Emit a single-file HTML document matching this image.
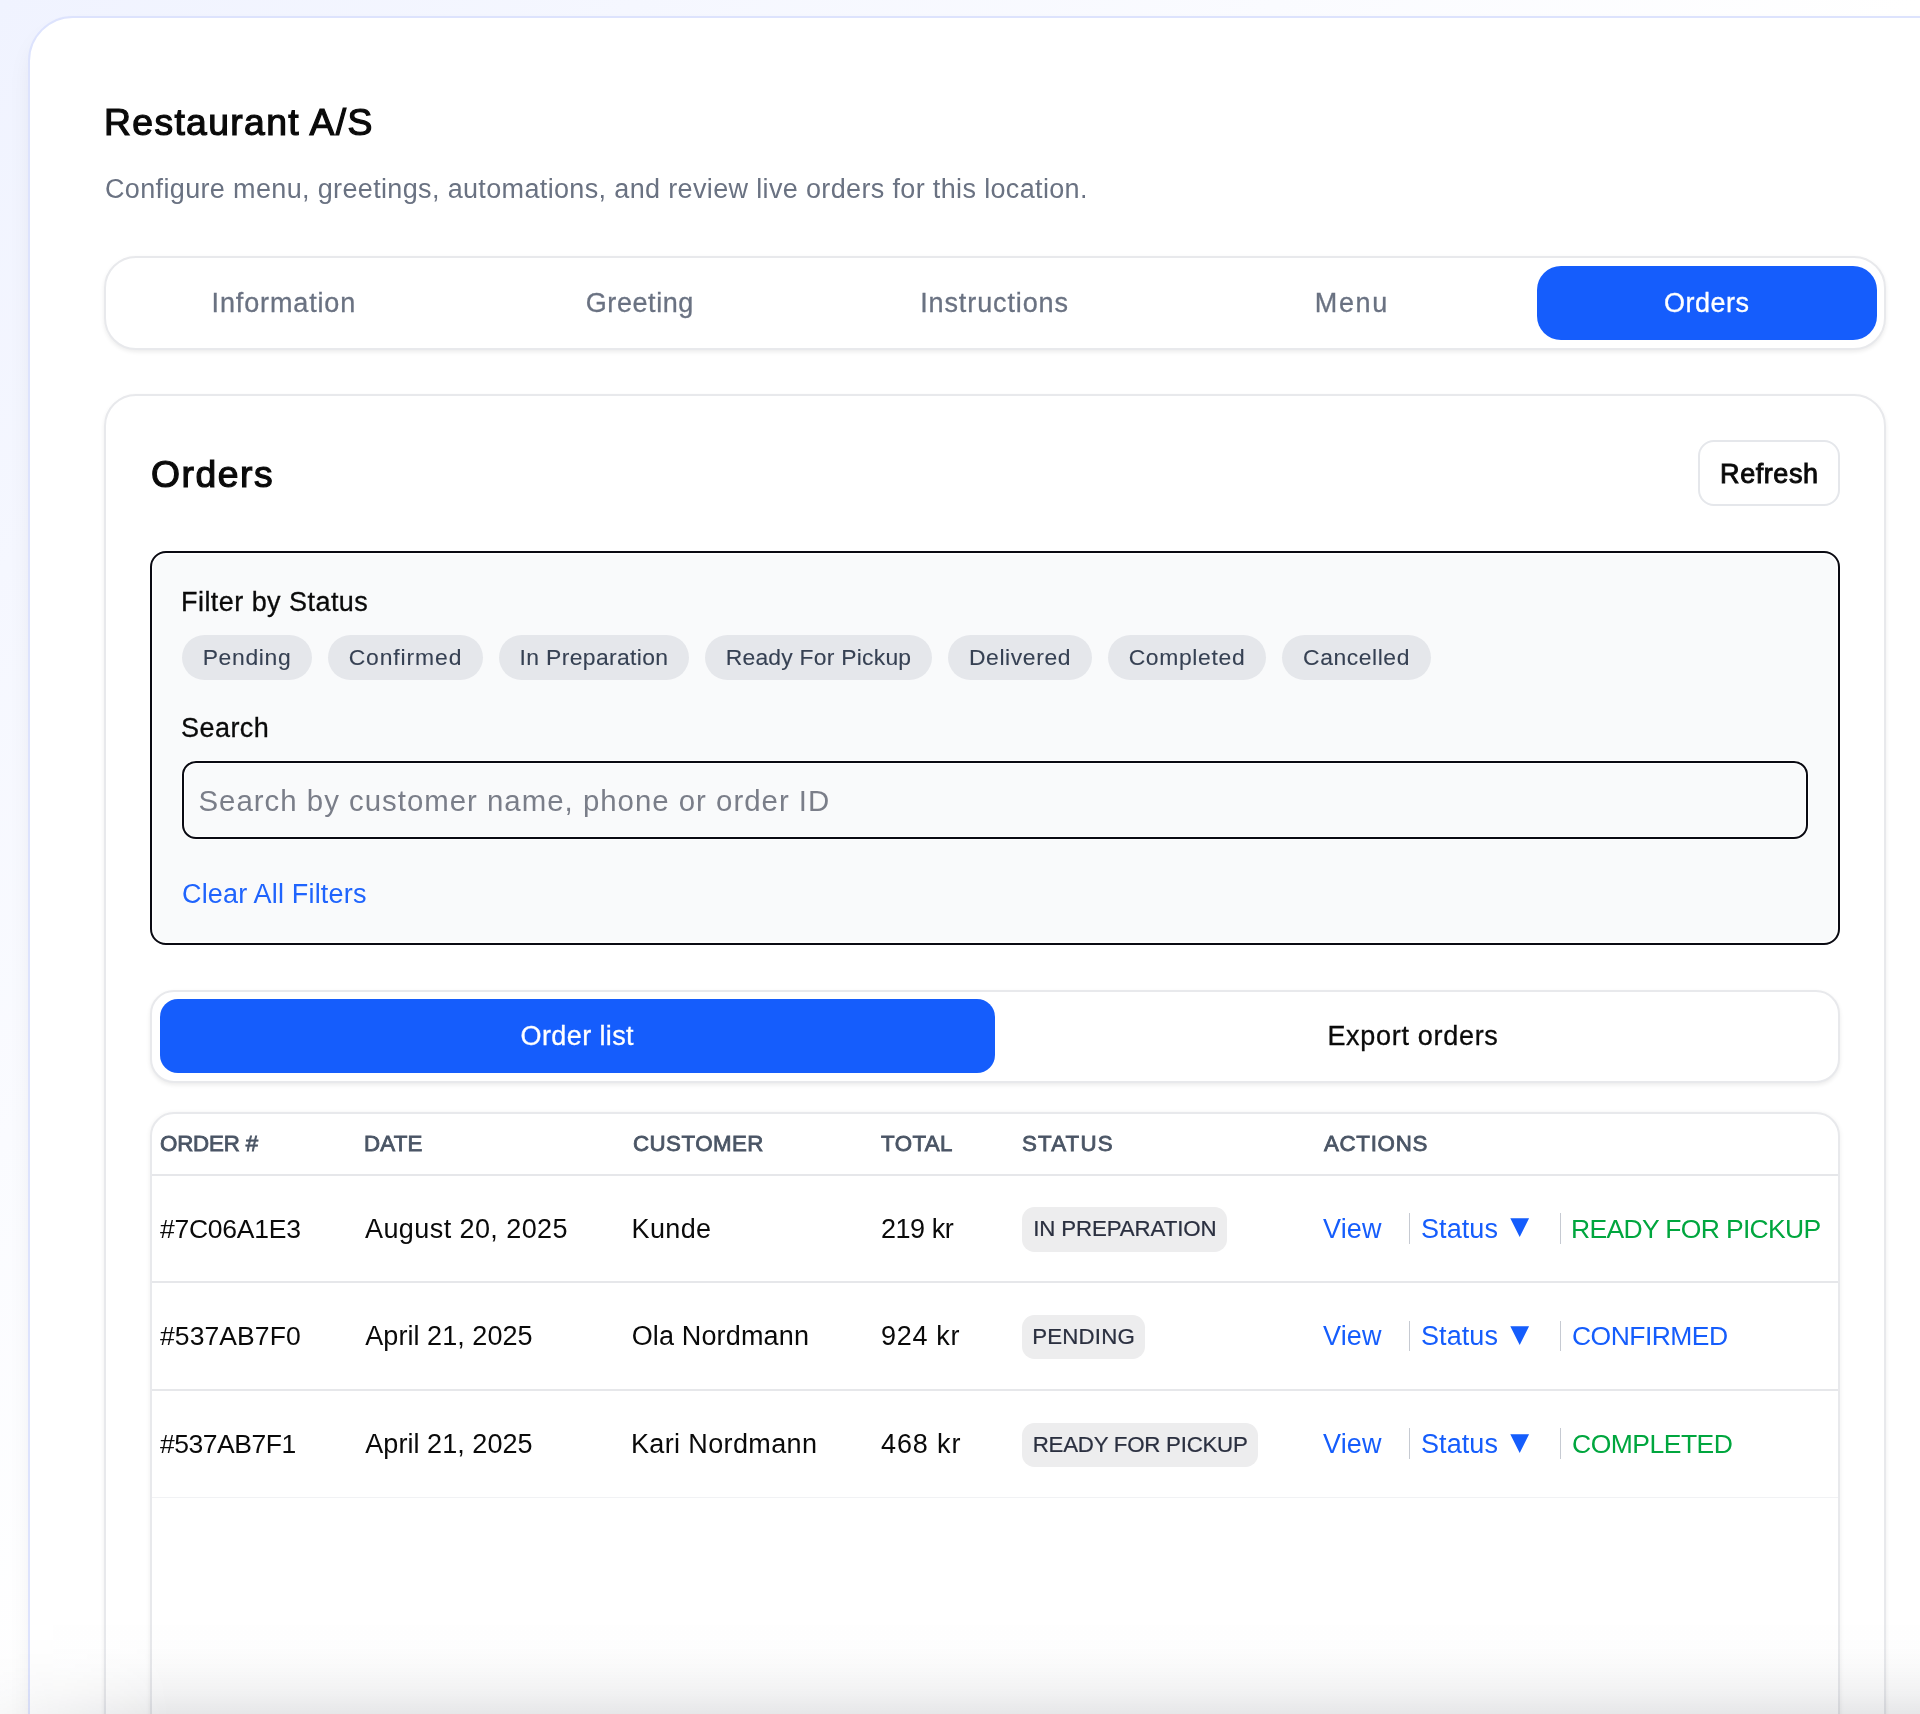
<!DOCTYPE html>
<html lang="en">
<head>
<meta charset="utf-8">
<title>Restaurant A/S – Orders</title>
<style>
*{box-sizing:border-box;margin:0;padding:0}
html,body{width:1920px;height:1714px;overflow:hidden}
body{font-family:"Liberation Sans",sans-serif;color:#0a0a0a;position:relative;
 background:linear-gradient(to bottom right,#f0f3ff 0%,#ffffff 50%,#ffffff 100%)}
.abs{position:absolute}
.page{position:absolute;left:27.6px;top:16.3px;width:1960px;height:1800px;background:#fff;border:2px solid #dde3fd;border-radius:45px;box-shadow:0 14px 28px -8px rgba(15,23,42,.10)}
h1{position:absolute;left:104px;top:100px;font-size:37.3px;line-height:44px;font-weight:400;-webkit-text-stroke:1.2px #0a0a0a;color:#0a0a0a;white-space:nowrap;letter-spacing:1.35px}
.sub{position:absolute;left:105px;top:171px;font-size:27px;line-height:36px;color:#6a7282;white-space:nowrap;letter-spacing:.35px}
.tabs{position:absolute;left:104px;top:256px;width:1782px;height:94px;border:2px solid #e8e9ec;border-radius:32px;background:#fff;box-shadow:0 2px 4px rgba(0,0,0,.08)}
.tab{position:absolute;top:7.6px;width:340.5px;height:74px;border-radius:24px;font-size:27px;line-height:74px;text-align:center;color:#6a7282;white-space:nowrap;-webkit-text-stroke:.3px currentColor}
.tab.on{background:#155dfc;color:#fff}
.card{position:absolute;left:104px;top:393.5px;width:1782px;height:1500px;border:2px solid #e8e9ec;border-radius:32px;background:#fff;box-shadow:0 2px 4px rgba(0,0,0,.07)}
h2{position:absolute;left:151px;top:451px;font-size:37.3px;line-height:46px;font-weight:400;-webkit-text-stroke:1.2px #0a0a0a;white-space:nowrap;letter-spacing:1.54px}
.refresh{position:absolute;left:1698px;top:440px;width:142px;height:66px;border:2px solid #e5e7eb;border-radius:16px;font-size:27px;font-weight:400;-webkit-text-stroke:.9px #0a0a0a;line-height:64px;letter-spacing:.57px;padding-left:.7px;text-align:center;background:#fff}
.filter{position:absolute;left:150px;top:551.3px;width:1690.3px;height:393.7px;border:2px solid #0a0a12;border-radius:16px;background:#f9fafb;box-shadow:inset 0 0 0 1.5px #fff}
.lbl{position:absolute;left:181px;font-size:27px;line-height:34px;color:#0a0a0a;white-space:nowrap;-webkit-text-stroke:.3px currentColor}
.chip{position:absolute;top:635px;height:45px;border-radius:23px;background:#e5e7eb;color:#364153;font-size:22.9px;line-height:45px;-webkit-text-stroke:.1px currentColor;text-align:center;white-space:nowrap}
.search{position:absolute;left:182px;top:761px;width:1626.4px;height:78px;border:2px solid #0a0a12;border-radius:14px;background:#f9fafb;box-shadow:inset 0 0 0 1px #fff,0 0 0 1px #fff;font-size:29.4px;line-height:76.5px;padding-left:14.5px;color:#7a7e89;white-space:nowrap;letter-spacing:1px}
.clear{position:absolute;left:182px;top:877px;font-size:27px;line-height:34px;color:#1f64fd;white-space:nowrap;letter-spacing:.18px}
.subtabs{position:absolute;left:150px;top:990px;width:1690px;height:93px;border:2px solid #e8e9ec;border-radius:24px;background:#fff;box-shadow:0 2px 4px rgba(0,0,0,.08)}
.stab{position:absolute;top:7px;height:74.4px;border-radius:18px;font-size:27px;line-height:74px;text-align:center;white-space:nowrap;color:#0a0a0a;-webkit-text-stroke:.3px currentColor}
.stab.on{background:#155dfc;color:#fff}
.table{position:absolute;left:150px;top:1112.4px;width:1690px;height:700px;border:2px solid #e8e9ec;border-radius:24px;background:#fff;box-shadow:0 1px 5px rgba(0,0,0,.07)}
.th{position:absolute;top:1129px;font-size:22.3px;line-height:30px;font-weight:400;-webkit-text-stroke:.8px #4a5565;color:#4a5565;white-space:nowrap}
.hr{position:absolute;left:152px;width:1686px;height:2px;background:#e6e7ea}
.td{position:absolute;font-size:27px;line-height:34px;color:#0a0a0a;white-space:nowrap}
.badge{position:absolute;height:44.8px;border-radius:12.5px;background:#ededee;color:#2b3040;font-size:22.3px;line-height:44.6px;-webkit-text-stroke:.22px currentColor;text-align:center;white-space:nowrap}
.tri{position:absolute;left:1510.2px;margin-top:-2.3px;font-size:24.6px;line-height:34px;white-space:nowrap;font-family:"DejaVu Sans",sans-serif}
.blue{color:#155dfc}.green{color:#00a63e}
.sep{position:absolute;width:1.5px;height:30.5px;background:#c6cad2}
.fade{position:absolute;left:0;top:1618px;width:1920px;height:96px;background:linear-gradient(to bottom,rgba(20,25,40,0) 0%,rgba(20,25,40,.008) 30%,rgba(20,25,40,.028) 55%,rgba(20,25,40,.06) 78%,rgba(20,25,40,.105) 100%);-webkit-mask-image:linear-gradient(to right,rgba(0,0,0,.3) 0px,rgba(0,0,0,.45) 40px,rgba(0,0,0,.75) 120px,#000 170px);mask-image:linear-gradient(to right,rgba(0,0,0,.3) 0px,rgba(0,0,0,.45) 40px,rgba(0,0,0,.75) 120px,#000 170px)}
</style>
</head>
<body>
<div class="page"></div>
<div id="root" style="position:absolute;left:0;top:0;width:1920px;height:1714px;will-change:transform">
<h1>Restaurant A/S</h1>
<div class="sub">Configure menu, greetings, automations, and review live orders for this location.</div>

<div class="tabs">
 <div class="tab" style="left:7.6px;letter-spacing:0.86px">Information</div>
 <div class="tab" style="left:363.6px;letter-spacing:0.57px">Greeting</div>
 <div class="tab" style="left:718.3px;letter-spacing:0.89px">Instructions</div>
 <div class="tab" style="left:1075.6px;letter-spacing:1.63px">Menu</div>
 <div class="tab on" style="left:1430.5px;letter-spacing:.5px">Orders</div>
</div>

<div class="card"></div>
<h2>Orders</h2>
<div class="refresh">Refresh</div>

<div class="filter"></div>
<div class="lbl" style="top:585px;letter-spacing:0.45px">Filter by Status</div>
<div class="chip" style="left:182px;width:130px;letter-spacing:0.67px">Pending</div>
<div class="chip" style="left:328px;width:155px;letter-spacing:0.9px">Confirmed</div>
<div class="chip" style="left:499px;width:190px;letter-spacing:0.37px">In Preparation</div>
<div class="chip" style="left:705px;width:227px;letter-spacing:0.23px">Ready For Pickup</div>
<div class="chip" style="left:948px;width:144px;letter-spacing:0.6px">Delivered</div>
<div class="chip" style="left:1108px;width:158px;letter-spacing:0.66px">Completed</div>
<div class="chip" style="left:1282px;width:149px;letter-spacing:0.56px">Cancelled</div>
<div class="lbl" style="top:711px;letter-spacing:0.46px">Search</div>
<div class="search">Search by customer name, phone or order ID</div>
<div class="clear">Clear All Filters</div>

<div class="subtabs">
 <div class="stab on" style="left:7.6px;width:835.4px;letter-spacing:0.39px">Order list</div>
 <div class="stab" style="left:843px;width:836px;letter-spacing:0.7px">Export orders</div>
</div>

<div class="table"></div>
<div class="th" style="left:160px;letter-spacing:-0.18px">ORDER #</div>
<div class="th" style="left:364px;letter-spacing:0.2px">DATE</div>
<div class="th" style="left:633px;letter-spacing:0.46px">CUSTOMER</div>
<div class="th" style="left:881px;letter-spacing:0.43px">TOTAL</div>
<div class="th" style="left:1022px;letter-spacing:1.18px">STATUS</div>
<div class="th" style="left:1324px;letter-spacing:0.7px">ACTIONS</div>
<div class="hr" style="top:1174px"></div>
<div class="hr" style="top:1281px"></div>
<div class="hr" style="top:1389px"></div>
<div class="hr" style="top:1496.9px;height:1.5px;background:#f1f2f4"></div>

<!-- row 1 -->
<div class="td" style="left:160px;top:1211.5px;letter-spacing:-0.25px;font-size:26.5px">#7C06A1E3</div>
<div class="td" style="left:365px;top:1211.5px;letter-spacing:0.42px">August 20, 2025</div>
<div class="td" style="left:631.5px;top:1211.5px;letter-spacing:0.38px">Kunde</div>
<div class="td" style="left:881px;top:1211.5px;letter-spacing:-0.46px">219 kr</div>
<div class="badge" style="left:1022.3px;top:1207px;width:205px;letter-spacing:-0.12px">IN PREPARATION</div>
<div class="td blue" style="left:1323px;top:1211.5px;letter-spacing:0.17px">View</div>
<div class="sep" style="left:1408.5px;top:1213px"></div>
<div class="td blue" style="left:1421px;top:1211.5px;letter-spacing:0.08px">Status</div>
<div class="tri blue" style="top:1211.5px">▼</div>
<div class="sep" style="left:1559.5px;top:1213px"></div>
<div class="td green" style="left:1571px;top:1211.5px;letter-spacing:-.66px;font-size:26.5px">READY FOR PICKUP</div>

<!-- row 2 -->
<div class="td" style="left:160px;top:1319px;letter-spacing:0.09px;font-size:26.5px">#537AB7F0</div>
<div class="td" style="left:365.3px;top:1319px;letter-spacing:0.05px">April 21, 2025</div>
<div class="td" style="left:631.7px;top:1319px;letter-spacing:0.15px">Ola Nordmann</div>
<div class="td" style="left:881px;top:1319px;letter-spacing:0.7px">924 kr</div>
<div class="badge" style="left:1022.3px;top:1314.6px;width:122.5px;letter-spacing:0.17px">PENDING</div>
<div class="td blue" style="left:1323px;top:1319px;letter-spacing:0.17px">View</div>
<div class="sep" style="left:1408.5px;top:1320.7px"></div>
<div class="td blue" style="left:1421px;top:1319px;letter-spacing:0.08px">Status</div>
<div class="tri blue" style="top:1319px">▼</div>
<div class="sep" style="left:1559.5px;top:1320.7px"></div>
<div class="td blue" style="left:1572px;top:1319px;letter-spacing:-0.54px;font-size:26.5px">CONFIRMED</div>

<!-- row 3 -->
<div class="td" style="left:160px;top:1426.8px;letter-spacing:-0.48px;font-size:26.5px">#537AB7F1</div>
<div class="td" style="left:365.3px;top:1426.8px;letter-spacing:0.05px">April 21, 2025</div>
<div class="td" style="left:631px;top:1426.8px;letter-spacing:0.36px">Kari Nordmann</div>
<div class="td" style="left:881px;top:1426.8px;letter-spacing:0.88px">468 kr</div>
<div class="badge" style="left:1022.3px;top:1422.5px;width:235.7px;letter-spacing:-.25px">READY FOR PICKUP</div>
<div class="td blue" style="left:1323px;top:1426.8px;letter-spacing:0.17px">View</div>
<div class="sep" style="left:1408.5px;top:1428.4px"></div>
<div class="td blue" style="left:1421px;top:1426.8px;letter-spacing:0.08px">Status</div>
<div class="tri blue" style="top:1426.8px">▼</div>
<div class="sep" style="left:1559.5px;top:1428.4px"></div>
<div class="td green" style="left:1572px;top:1426.8px;letter-spacing:-0.5px;font-size:26.5px">COMPLETED</div>

</div>
<div class="fade"></div>
</body>
</html>
